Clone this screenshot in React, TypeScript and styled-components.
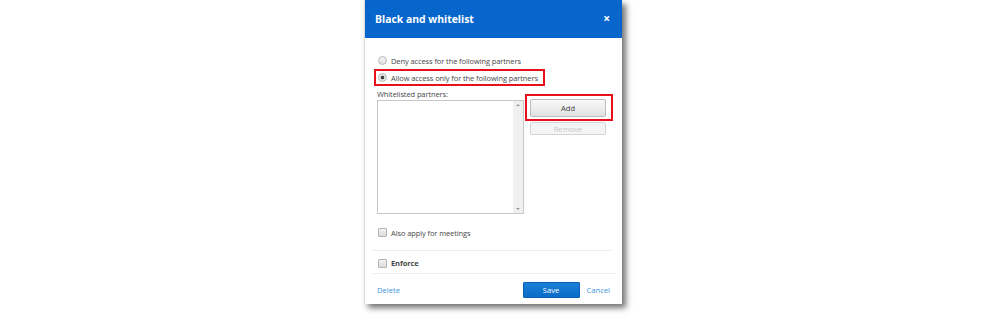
import styled, { createGlobalStyle } from 'styled-components';

const GlobalStyle = createGlobalStyle`
  html, body {
    margin: 0;
    padding: 0;
    background: #ffffff;
  }
  body {
    font-family: "Open Sans", "Noto Sans", "Liberation Sans", sans-serif;
  }
`

const Page = styled.div`
  width: 986px;
  height: 318px;
  display: flex;
  justify-content: center;
  align-items: flex-start;
`

const Dialog = styled.div`
  width: 258px;
  height: 304px;
  background: #ffffff;
  border-left: 1px solid #dcdcdc;
  box-shadow: 4px 4px 6px rgba(0, 0, 0, 0.55);
  display: flex;
  flex-direction: column;
  box-sizing: border-box;
`

const Header = styled.div`
  height: 38px;
  background: #0766cb;
  display: flex;
  justify-content: space-between;
  align-items: center;
  padding: 0 12px 0 10px;
  color: #ffffff;
  flex-shrink: 0;
`

const Title = styled.div`
  font-size: 10.4px;
  font-weight: bold;
`

const Close = styled.div`
  font-size: 12px;
  font-weight: bold;
  line-height: 1;
`

const Body = styled.div`
  padding: 14px 6px 0 7px;
  display: flex;
  flex-direction: column;
`

const Inner = styled.div`
  padding: 0 0 0 5px;
  display: flex;
  flex-direction: column;
`

const OptionRow = styled.div`
  height: 17px;
  display: flex;
  align-items: center;
  gap: 4px;
  padding-left: 1px;
  font-size: 7.5px;
  letter-spacing: -0.1px;
  color: #484848;
`

const Highlight = styled.div<{ $padding: string }>`
  border: 2px solid #e8101a;
  padding: ${p => p.$padding};
  align-self: flex-start;
  box-sizing: border-box;
`

const Radio = styled.span<{ $checked?: boolean }>`
  width: 7px;
  height: 7px;
  border-radius: 50%;
  border: 1px solid #b8b8b8;
  background: ${p => p.$checked
    ? 'radial-gradient(circle, #444 0 1.6px, #e8e8e8 2.2px)'
    : 'linear-gradient(#f4f4f4, #dedede)'};
  flex-shrink: 0;
`

const Check = styled.span`
  width: 7px;
  height: 7px;
  border: 1px solid #b4b4b4;
  border-radius: 1px;
  background: linear-gradient(#f2f2f2, #dcdcdc);
  flex-shrink: 0;
`

const FieldLabel = styled.div`
  font-size: 7.5px;
  letter-spacing: -0.1px;
  color: #484848;
  margin-top: 2px;
  height: 12px;
  line-height: 12px;
`

const ListRow = styled.div`
  display: flex;
  align-items: flex-start;
  gap: 1px;
  margin-top: -6px;
`

const ListBox = styled.div`
  width: 147px;
  height: 114px;
  margin-top: 6px;
  border: 1px solid #c8c8c8;
  box-sizing: border-box;
  display: flex;
  justify-content: flex-end;
`

const Scrollbar = styled.div`
  width: 10px;
  background: #f0f0f0;
  display: flex;
  flex-direction: column;
  justify-content: space-between;
  align-items: center;
  padding: 3px 0;
  box-sizing: border-box;
`

const Arrow = styled.span<{ $down?: boolean }>`
  width: 0;
  height: 0;
  border-left: 2px solid transparent;
  border-right: 2px solid transparent;
  ${p => p.$down ? 'border-top: 2px solid #999;' : 'border-bottom: 2px solid #999;'}
`

const ButtonColumn = styled.div`
  display: flex;
  flex-direction: column;
  align-items: flex-start;
`

const GrayButton = styled.div<{ $disabled?: boolean }>`
  width: 76px;
  height: ${p => p.$disabled ? '13px' : '18px'};
  box-sizing: border-box;
  border: 1px solid ${p => p.$disabled ? '#d4d4d4' : '#bcbcbc'};
  border-radius: 2px;
  background: ${p => p.$disabled ? '#f5f5f5' : 'linear-gradient(#f8f8f8, #e2e2e2)'};
  color: ${p => p.$disabled ? '#c8c8c8' : '#444'};
  font-size: 7.6px;
  display: flex;
  align-items: center;
  justify-content: center;
`

const RemoveWrap = styled.div`
  margin: 1px 0 0 5px;
`

const MeetingsRow = styled(OptionRow)`
  margin-top: 10px;
`

const Divider = styled.div<{ $right: number }>`
  height: 1px;
  background: #ececec;
  margin-right: ${p => p.$right}px;
`

const EnforceRow = styled(OptionRow)`
  font-weight: bold;
  margin: 3px 0 1px 5px;
  height: 18px;
`

const Footer = styled.div`
  display: flex;
  align-items: center;
  padding: 8px 12px 0 12px;
  height: 16px;
`

const Link = styled.span`
  font-size: 7.6px;
  color: #3d94e0;
`

const Spacer = styled.div`
  flex: 1;
`

const SaveButton = styled.div`
  width: 57px;
  height: 16px;
  background: linear-gradient(#1a80d8, #0a6cc6);
  border: 1px solid #0a60b4;
  box-sizing: border-box;
  border-radius: 1px;
  color: #ffffff;
  font-size: 7.6px;
  display: flex;
  align-items: center;
  justify-content: center;
  margin-right: 7px;
`

export default function App() {
  return <>
    <GlobalStyle />
    <Page>
      <Dialog>
        <Header>
          <Title>Black and whitelist</Title>
          <Close>×</Close>
        </Header>
        <Body>
          <Inner>
            <OptionRow>
              <Radio />
              Deny access for the following partners
            </OptionRow>
            <Highlight $padding="0 5px 0 0" style={{ marginLeft: -3 }}>
              <OptionRow style={{ height: 13, paddingLeft: 2 }}>
                <Radio $checked />
                Allow access only for the following partners
              </OptionRow>
            </Highlight>
            <FieldLabel>Whitelisted partners:</FieldLabel>
            <ListRow>
              <ListBox>
                <Scrollbar>
                  <Arrow />
                  <Arrow $down />
                </Scrollbar>
              </ListBox>
              <ButtonColumn>
                <Highlight $padding="3px 5px 2px 3px">
                  <GrayButton>Add</GrayButton>
                </Highlight>
                <RemoveWrap>
                  <GrayButton $disabled>Remove</GrayButton>
                </RemoveWrap>
              </ButtonColumn>
            </ListRow>
            <MeetingsRow>
              <Check />
              Also apply for meetings
            </MeetingsRow>
          </Inner>
          <Divider $right={5} style={{ marginTop: 9 }} />
          <EnforceRow>
            <Check />
            Enforce
          </EnforceRow>
          <Divider $right={0} />
        </Body>
        <Footer>
          <Link>Delete</Link>
          <Spacer />
          <SaveButton>Save</SaveButton>
          <Link>Cancel</Link>
        </Footer>
      </Dialog>
    </Page>
  </>;
}
